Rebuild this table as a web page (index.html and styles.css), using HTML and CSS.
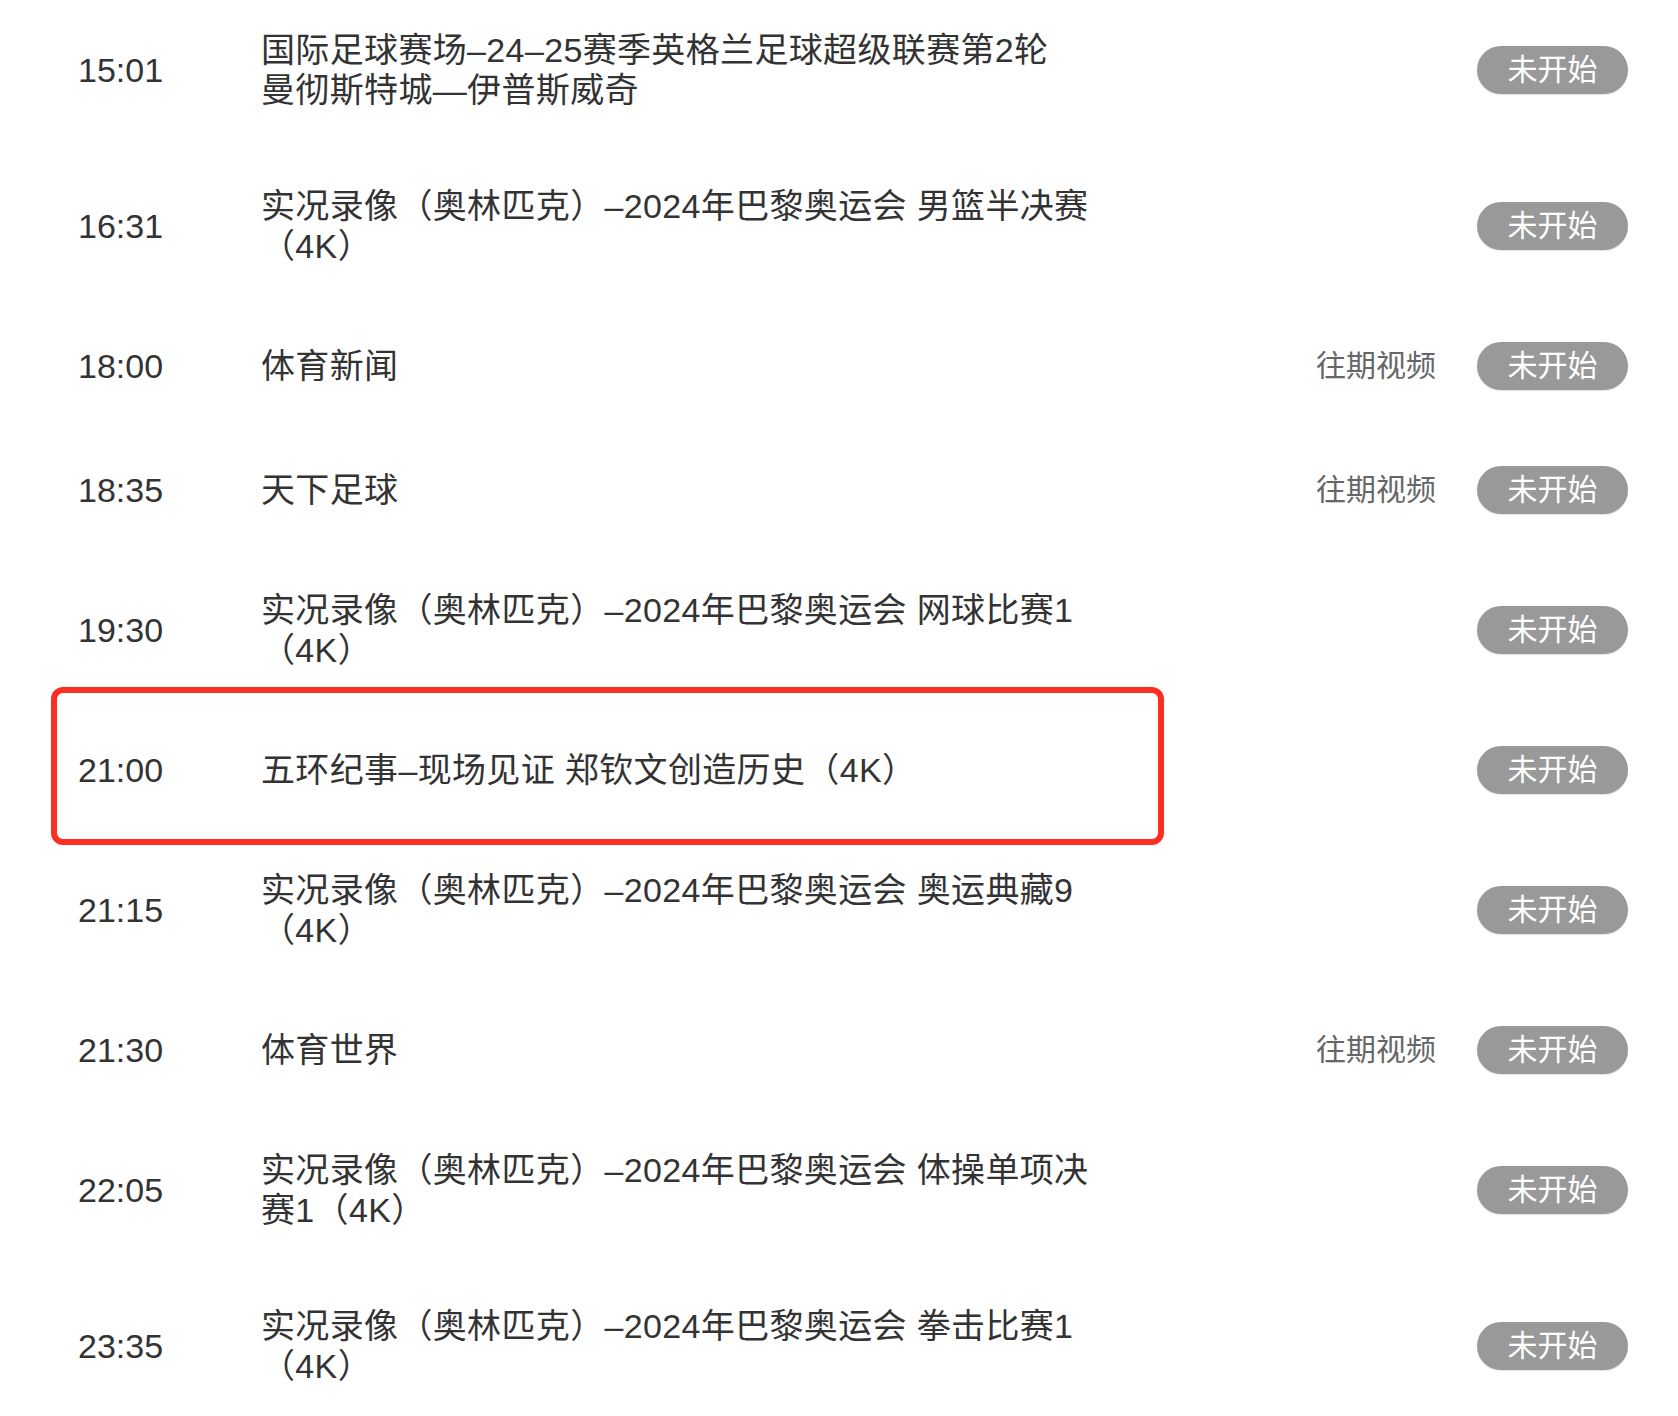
FILE: index.html
```html
<!DOCTYPE html>
<html lang="zh-CN">
<head>
<meta charset="utf-8">
<title>节目单</title>
<link rel="stylesheet" href="styles.css">
</head>
<body>
<ul class="schedule">
  <li class="row">
    <span class="time">15:01</span>
    <div class="title">国际足球赛场–24–25赛季英格兰足球超级联赛第2轮<br>曼彻斯特城—伊普斯威奇</div>
    <div class="actions"><span class="status">未开始</span></div>
  </li>
  <li class="row">
    <span class="time">16:31</span>
    <div class="title">实况录像（奥林匹克）–2024年巴黎奥运会 男篮半决赛<br>（4K）</div>
    <div class="actions"><span class="status">未开始</span></div>
  </li>
  <li class="row">
    <span class="time">18:00</span>
    <div class="title">体育新闻</div>
    <div class="actions"><a class="replay">往期视频</a><span class="status">未开始</span></div>
  </li>
  <li class="row">
    <span class="time">18:35</span>
    <div class="title">天下足球</div>
    <div class="actions"><a class="replay">往期视频</a><span class="status">未开始</span></div>
  </li>
  <li class="row">
    <span class="time">19:30</span>
    <div class="title">实况录像（奥林匹克）–2024年巴黎奥运会 网球比赛1<br>（4K）</div>
    <div class="actions"><span class="status">未开始</span></div>
  </li>
  <li class="row">
    <div class="highlight"></div>
    <span class="time">21:00</span>
    <div class="title">五环纪事–现场见证 郑钦文创造历史（4K）</div>
    <div class="actions"><span class="status">未开始</span></div>
  </li>
  <li class="row">
    <span class="time">21:15</span>
    <div class="title">实况录像（奥林匹克）–2024年巴黎奥运会 奥运典藏9<br>（4K）</div>
    <div class="actions"><span class="status">未开始</span></div>
  </li>
  <li class="row">
    <span class="time">21:30</span>
    <div class="title">体育世界</div>
    <div class="actions"><a class="replay">往期视频</a><span class="status">未开始</span></div>
  </li>
  <li class="row">
    <span class="time">22:05</span>
    <div class="title">实况录像（奥林匹克）–2024年巴黎奥运会 体操单项决<br>赛1（4K）</div>
    <div class="actions"><span class="status">未开始</span></div>
  </li>
  <li class="row">
    <span class="time">23:35</span>
    <div class="title">实况录像（奥林匹克）–2024年巴黎奥运会 拳击比赛1<br>（4K）</div>
    <div class="actions"><span class="status">未开始</span></div>
  </li>
</ul>
</body>
</html>
```

FILE: styles.css
```css
html, body {
  margin: 0;
  padding: 0;
  background: #ffffff;
}

body {
  font-family: "Liberation Sans", "Noto Sans CJK SC", sans-serif;
  color: #333333;
  overflow: hidden;
}

.schedule {
  list-style: none;
  margin: -8px 0 0 0;
  padding: 0;
}

.row {
  position: relative;
  display: flex;
  align-items: center;
  padding: 38px 50px 38px 78px;
}

.time {
  flex: none;
  width: 183px;
  font-size: 34px;
  line-height: 40px;
  color: #333333;
}

.title {
  flex: none;
  width: 860px;
  font-size: 34px;
  line-height: 40px;
  letter-spacing: 0.35px;
  color: #333333;
}

.actions {
  margin-left: auto;
  display: flex;
  align-items: center;
  gap: 41px;
}

.replay {
  font-size: 30px;
  line-height: 40px;
  color: #666666;
  cursor: pointer;
}

.status {
  display: flex;
  align-items: center;
  justify-content: center;
  width: 151px;
  height: 48px;
  border-radius: 24px;
  background: #999999;
  color: #ffffff;
  font-size: 30px;
  line-height: 48px;
  box-shadow: 0 1px 1px rgba(0, 0, 0, 0.12);
}

.highlight {
  position: absolute;
  top: -21px;
  left: 51px;
  width: 1113px;
  height: 158px;
  box-sizing: border-box;
  border: 6px solid #fc2e22;
  border-radius: 12px;
  pointer-events: none;
}
```
